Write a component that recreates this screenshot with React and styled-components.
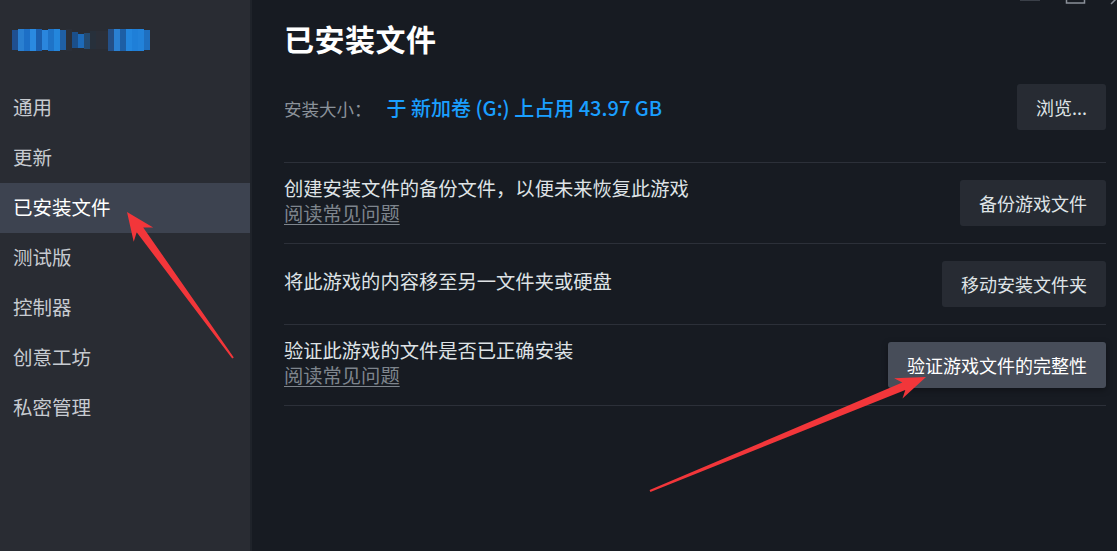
import styled, { createGlobalStyle } from 'styled-components';

const GlobalStyle = createGlobalStyle`
  html, body {
    margin: 0;
    padding: 0;
    background: #171b22;
  }
  body {
    font-family: "Noto Sans CJK SC", "Noto Sans", Arial, sans-serif;
    overflow: hidden;
  }
`;

const Shell = styled.div`
  position: relative;
  display: flex;
  width: 1117px;
  height: 551px;
  overflow: hidden;
  background: #171b22;
`;

const Sidebar = styled.nav`
  width: 250px;
  flex-shrink: 0;
  background: #292c33;
  border-right: 2px solid #1f232a;
  display: flex;
  flex-direction: column;
  padding-top: 28px;
`;

const Blur = styled.div`
  display: flex;
  margin-left: 12px;
  height: 24px;
  margin-bottom: 31px;
`;

const Pixel = styled.span`
  width: 6px;
  height: ${(p) => p.$h}px;
  margin-top: ${(p) => p.$t}px;
  background: ${(p) => p.$c};
`;

const NavItem = styled.div`
  height: 50px;
  box-sizing: border-box;
  display: flex;
  align-items: center;
  padding: 0 0 3px 13px;
  font-size: 19.5px;
  color: ${(p) => (p.$active ? '#ffffff' : '#c7cbd1')};
  background: ${(p) => (p.$active ? '#3d4350' : 'transparent')};
`;

const Main = styled.main`
  flex: 1;
  padding: 18px 11px 0 32px;
  display: flex;
  flex-direction: column;
`;

const Title = styled.h1`
  margin: 0;
  font-size: 30px;
  font-weight: 700;
  color: #ffffff;
  line-height: 40px;
  letter-spacing: 0.5px;
`;

const SizeRow = styled.div`
  display: flex;
  align-items: center;
  justify-content: space-between;
  height: 46px;
  margin-top: 26px;
  margin-bottom: 32px;
`;

const SizeLabel = styled.span`
  font-size: 17.5px;
  color: #8b929a;
  margin-right: 15px;
`;

const SizeValue = styled.span`
  font-size: 20px;
  font-weight: 500;
  color: #1a9fff;
`;

const Row = styled.div`
  display: flex;
  align-items: center;
  justify-content: space-between;
  height: 80px;
  border-top: 1px solid #2c3039;
  ${(p) => p.$last && 'border-bottom: 1px solid #2c3039;'}
`;

const RowText = styled.div`
  display: flex;
  flex-direction: column;
  margin-top: -5px;
`;

const Desc = styled.span`
  font-size: 19.3px;
  color: #dfe3e6;
  line-height: 25px;
`;

const Faq = styled.span`
  font-size: 19.3px;
  color: #7e858d;
  text-decoration: underline;
  text-underline-offset: 3px;
  line-height: 25px;
`;

const Button = styled.button`
  height: 46px;
  padding: 0 19px;
  border: none;
  border-radius: 3px;
  font-family: inherit;
  font-size: 18px;
  color: ${(p) => (p.$hover ? '#ffffff' : '#dfe3e6')};
  background: ${(p) => (p.$hover ? '#474d59' : '#272b33')};
  box-shadow: ${(p) => (p.$hover ? '0 2px 6px rgba(0,0,0,0.35)' : 'none')};
  cursor: pointer;
`;

const Overlay = styled.svg`
  position: absolute;
  left: 0;
  top: 0;
  pointer-events: none;
`;

function arrowPoints(tip, tail, head = 28, wing = 12, shaft = 4, end = 1) {
  const dx = tip[0] - tail[0];
  const dy = tip[1] - tail[1];
  const len = Math.hypot(dx, dy);
  const u = [dx / len, dy / len];
  const n = [-u[1], u[0]];
  const at = (d, w) => [tip[0] - u[0] * d + n[0] * w, tip[1] - u[1] * d + n[1] * w];
  const pts = [
    tip,
    at(head, wing),
    at(head - 6, shaft),
    [tail[0] + n[0] * end, tail[1] + n[1] * end],
    [tail[0] - n[0] * end, tail[1] - n[1] * end],
    at(head - 6, -shaft),
    at(head, -wing),
  ];
  return pts.map((p) => p.map((v) => v.toFixed(1)).join(',')).join(' ');
}

// censored account name, drawn as a row of coloured pixel columns
const blurCols = [
  ['#1f4f8f', 20, 2], ['#2a7fd0', 22, 1], ['#1d6fc6', 22, 1], ['#2a8ae0', 22, 1],
  ['#1b5fae', 22, 1], ['#2a86dd', 20, 2], ['#1e73c8', 22, 1], ['#2486dc', 22, 1],
  ['#1f5fa4', 20, 2], ['#2b2f38', 22, 1], ['#1b4f8a', 16, 4], ['#1d6ab8', 14, 6],
  ['#244a70', 16, 5], ['#27303b', 18, 3], ['#2b2f38', 18, 3], ['#2b2f38', 18, 3],
  ['#244f86', 22, 1], ['#2a80d2', 22, 1], ['#1d5fa6', 22, 1], ['#2386de', 22, 1],
  ['#1f7fd8', 22, 1], ['#2282da', 22, 1], ['#1f6fc0', 20, 2],
];

const navItems = ['通用', '更新', '已安装文件', '测试版', '控制器', '创意工坊', '私密管理'];

export default function App() {
  return (
    <Shell>
      <GlobalStyle />
      <Sidebar>
        <Blur>
          {blurCols.map(([c, h, t], i) => (
            <Pixel key={i} $c={c} $h={h} $t={t} />
          ))}
        </Blur>
        {navItems.map((item) => (
          <NavItem key={item} $active={item === '已安装文件'}>
            {item}
          </NavItem>
        ))}
      </Sidebar>
      <Main>
        <Title>已安装文件</Title>
        <SizeRow>
          <div>
            <SizeLabel>安装大小：</SizeLabel>
            <SizeValue>于 新加卷 (G:) 上占用 43.97 GB</SizeValue>
          </div>
          <Button>浏览...</Button>
        </SizeRow>
        <Row>
          <RowText>
            <Desc>创建安装文件的备份文件，以便未来恢复此游戏</Desc>
            <Faq>阅读常见问题</Faq>
          </RowText>
          <Button>备份游戏文件</Button>
        </Row>
        <Row>
          <RowText>
            <Desc>将此游戏的内容移至另一文件夹或硬盘</Desc>
          </RowText>
          <Button>移动安装文件夹</Button>
        </Row>
        <Row $last>
          <RowText>
            <Desc>验证此游戏的文件是否已正确安装</Desc>
            <Faq>阅读常见问题</Faq>
          </RowText>
          <Button $hover>验证游戏文件的完整性</Button>
        </Row>
      </Main>
      <Overlay width="1117" height="551" viewBox="0 0 1117 551">
        <line x1="1020" y1="0.5" x2="1040" y2="0.5" stroke="#3a3f48" strokeWidth="1" />
        <rect x="1066.5" y="-6" width="18" height="9" fill="none" stroke="#8a9099" strokeWidth="1.5" />
        <line x1="1111" y1="4" x2="1116" y2="-1" stroke="#8a9099" strokeWidth="1.5" />
        <polygon points={arrowPoints([127, 212], [233, 358])} fill="#f2363a" />
        <polygon points={arrowPoints([926, 377], [650, 491], 30, 11)} fill="#f2363a" />
      </Overlay>
    </Shell>
  );
}
